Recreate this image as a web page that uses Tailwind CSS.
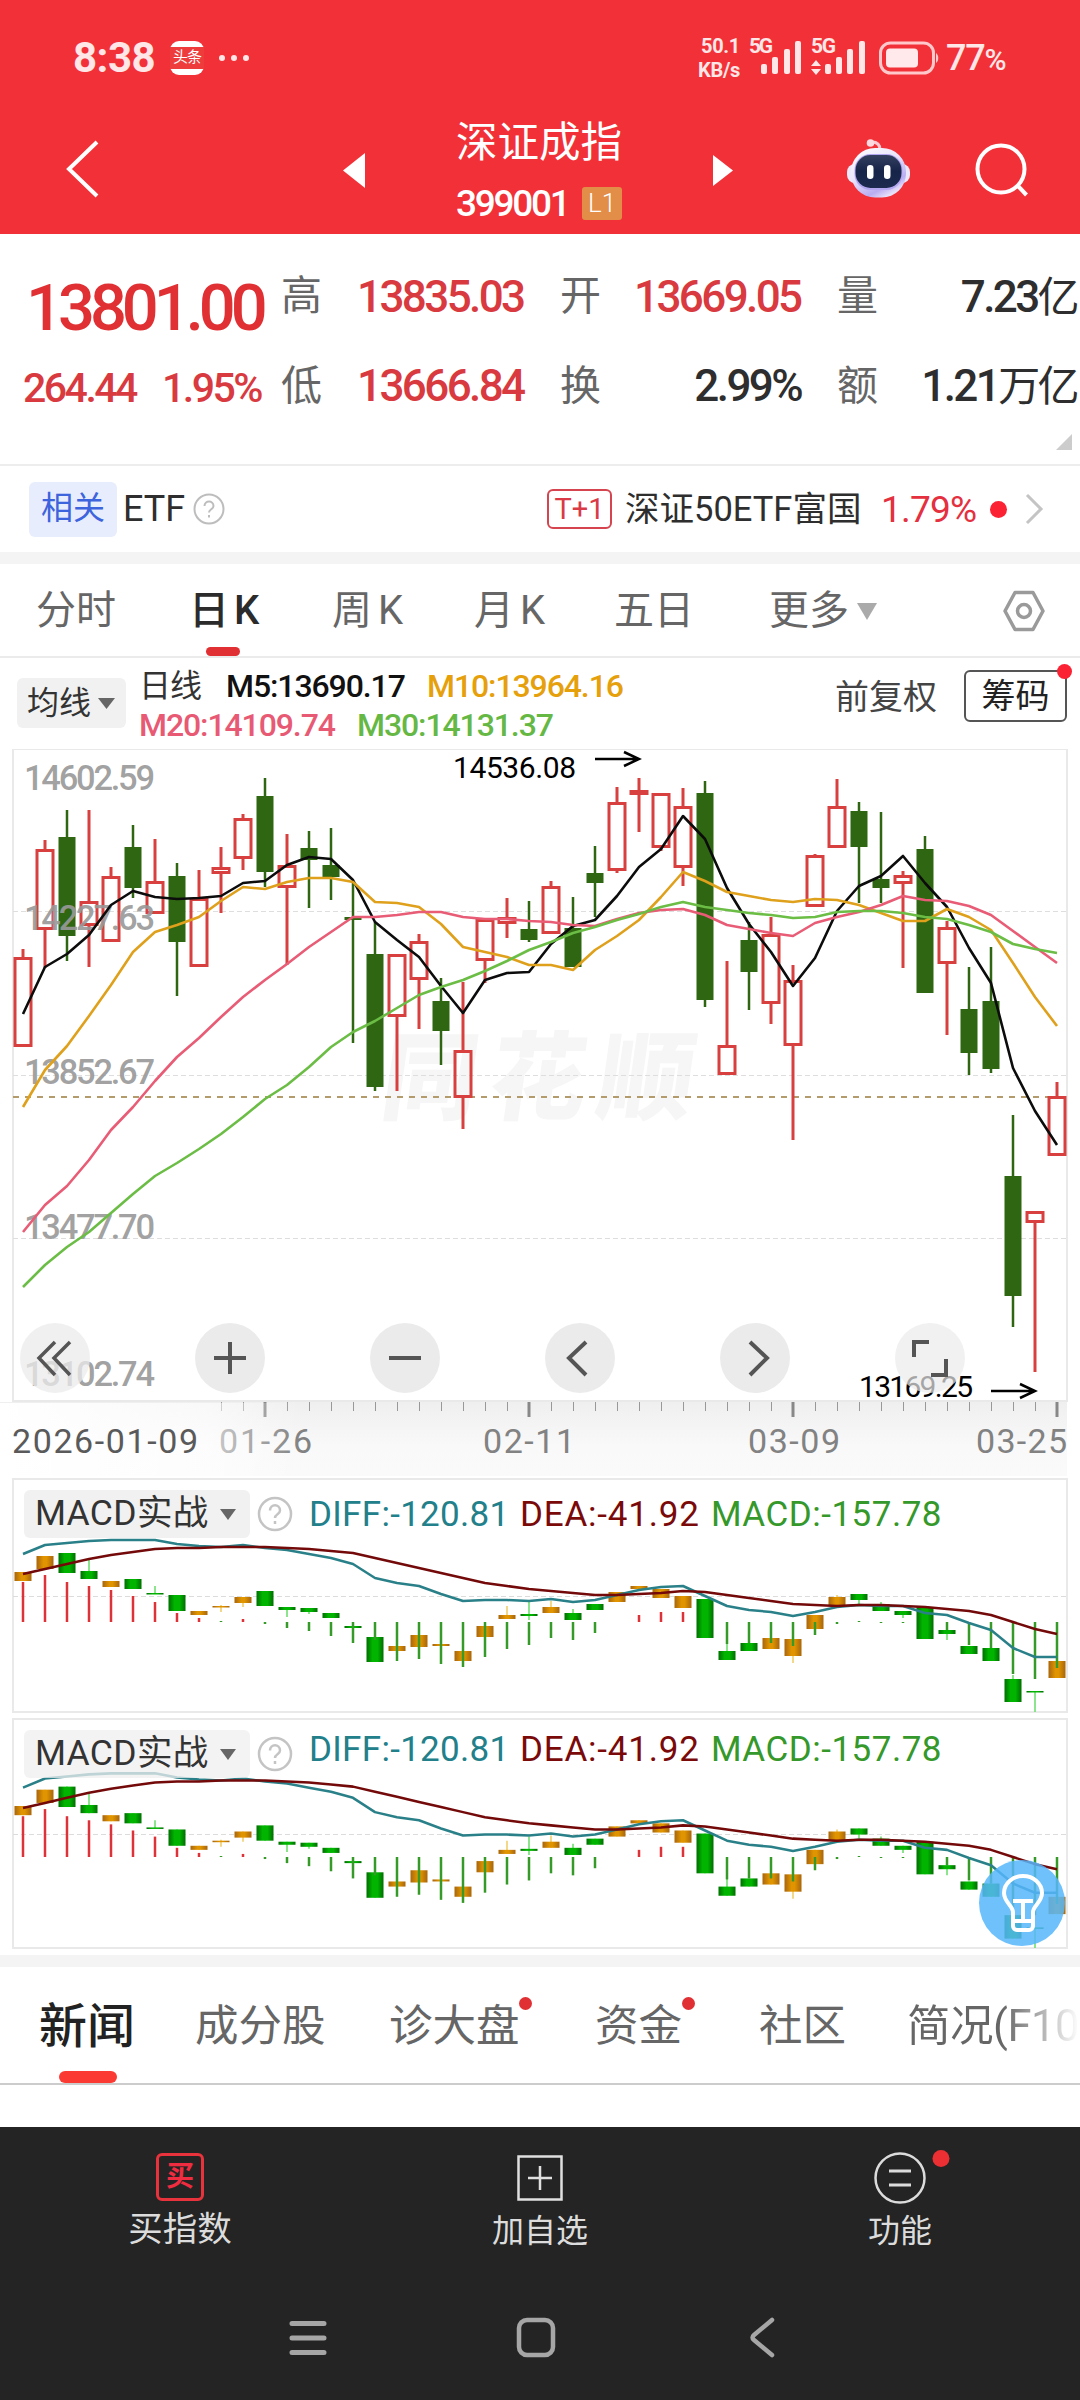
<!DOCTYPE html>
<html lang="zh-CN">
<head>
  <meta charset="UTF-8" />
  <meta name="viewport" content="width=device-width, initial-scale=1.0" />
  <title>深证成指 399001</title>
  <script src="https://cdn.jsdelivr.net/npm/@tailwindcss/browser@4"></script>
</head>
<body class="bg-white">
  <div class="w-[1080px] h-[2400px] overflow-hidden flex flex-col bg-white leading-none whitespace-nowrap font-[Roboto,'Noto_Sans_CJK_SC',sans-serif]">

    <!-- Header -->
    <header class="h-[234px] shrink-0 bg-[#f23037] text-white">
      <!-- Status bar -->
      <div class="h-[116px] flex items-center pl-[73px] text-[#ffe6e7]">
        <span class="w-[97px] text-[42px] font-bold tracking-[-.5px]">8:38</span>
        <span class="w-[34px] h-[34px] rounded-[9px] bg-white flex items-center">
          <span class="w-full h-[22px] bg-[#ee3b3c] text-white text-[15px] leading-[21px] text-center tracking-[-1px]">头条</span>
        </span>
        <svg class="ml-[14px]" width="32" height="8" fill="#ffe6e7"><circle cx="4" cy="4" r="3" /><circle cx="16" cy="4" r="3" /><circle cx="28" cy="4" r="3" /></svg>
        <div class="ml-[448px] w-[50px] text-[20px] font-bold leading-[24px] tracking-[-.300px]">
          <div class="pl-[3px]">50.1</div>
          <div>KB/s</div>
        </div>
        <svg width="118" height="60" viewBox="748 29 118 60" fill="#ffe6e7">
          <g font-family="Roboto" font-size="21" font-weight="700"><text x="749" y="54" textLength="24">5G</text><text x="811" y="54" textLength="25">5G</text></g>
          <rect x="761" y="65" width="6" height="10" rx="2" /><rect x="772" y="58" width="6" height="17" rx="2" /><rect x="784" y="50" width="6" height="25" rx="2" /><rect x="795" y="42" width="6" height="33" rx="2" />
          <path d="M811 67l5-6 5 6zM811 70h10l-5 6z" />
          <rect x="825" y="65" width="6" height="10" rx="2" /><rect x="836" y="58" width="6" height="17" rx="2" /><rect x="847" y="50" width="6" height="25" rx="2" /><rect x="859" y="42" width="6" height="33" rx="2" />
        </svg>
        <svg class="ml-[13px]" width="61" height="34" viewBox="0 0 61 34" fill="none">
          <rect x="1.5" y="2" width="53" height="30" rx="10" stroke="#ffc9cb" stroke-width="3" />
          <rect x="7" y="7.500" width="32" height="19" rx="4" fill="#ffe9ea" />
          <path d="M57 12c3 2 3 8 0 10z" fill="#ffc9cb" />
        </svg>
        <span class="ml-[6px] text-[36px] font-medium tracking-[-1.200px]">77<span class="text-[30px]">%</span></span>
      </div>

      <!-- Title bar -->
      <div class="h-[118px] flex">
        <svg class="ml-[66px] mt-[24px]" width="33" height="58" viewBox="0 0 33 58" fill="none" stroke="#fff" stroke-width="4"><path d="M31 2L3 29l28 27" /></svg>
        <svg class="ml-[244px] mt-[37px]" width="22" height="35" fill="#fff"><path d="M22 0v35L0 17.500z" /></svg>
        <div class="ml-[91px] w-[168px]">
          <div class="h-[56px] leading-[54px] text-[41.500px]">深证成指</div>
          <div class="mt-[4px] h-[54px] flex items-center">
            <span class="w-[126px] text-[37px] font-medium tracking-[-2.300px]">399001</span>
            <span class="w-[40px] h-[33px] bg-[#e28d48] rounded-[3px] text-[26px] leading-[33px] text-center font-light">L1</span>
          </div>
        </div>
        <svg class="ml-[89px] mt-[39px]" width="21" height="31" fill="#fff"><path d="M0 0v31l20-15.500z" /></svg>
        <svg class="ml-[112px] mt-[22px]" width="66" height="63" viewBox="0 0 66 63">
          <defs>
            <linearGradient id="shell" x1="0" y1="0" x2=".6" y2="1"><stop offset="0" stop-color="#fff" /><stop offset=".5" stop-color="#e9e4fb" /><stop offset=".85" stop-color="#b9adf2" /><stop offset="1" stop-color="#e6dff8" /></linearGradient>
            <linearGradient id="visor" x1="0" y1="0" x2="0" y2="1"><stop offset="0" stop-color="#34405e" /><stop offset=".5" stop-color="#17244a" /><stop offset="1" stop-color="#1d2a50" /></linearGradient>
          </defs>
          <path d="M34 12c0-6-3-8-8-8" stroke="#fbc9d3" stroke-width="3" fill="none" />
          <circle cx="24.500" cy="5" r="3.800" fill="#fcd9e0" />
          <rect x="1" y="26" width="63" height="19" rx="8" fill="#ece8fb" />
          <rect x="5" y="10" width="55" height="49.500" rx="24" fill="url(#shell)" />
          <rect x="8.500" y="16" width="48" height="36" rx="16" fill="#b3a6f0" />
          <rect x="9.500" y="17" width="46" height="33" rx="15" fill="url(#visor)" />
          <rect x="21" y="27" width="6.500" height="14" rx="3.200" fill="#fff" /><rect x="38" y="27" width="6.500" height="14" rx="3.200" fill="#fff" />
        </svg>
        <svg class="ml-[62px] mt-[25px]" width="56" height="57" viewBox="0 0 56 57" fill="none" stroke="#fff" stroke-width="4"><circle cx="27" cy="28" r="23.500" /><path d="M43 44l9.500 10" /></svg>
      </div>
    </header>

    <!-- Quote numbers -->
    <section class="relative h-[230px] shrink-0 pt-[22px] grid grid-cols-[281px_76px_203px_74px_203px_80px_163px] grid-rows-[80px_80px] gap-y-[10px] items-center text-[44px] text-[#2e2e2e] tracking-[-2.600px]">
      <span class="pl-[26px] pt-[25px] text-[65px] text-[#e03033] font-medium tracking-[-5px]">13801.00</span>
      <span class="pt-[1px] text-[41px] text-[#666]">高</span>
      <span class="pt-[2px] text-[#d93a3f] font-medium">13835.03</span>
      <span class="pt-[1px] text-[41px] text-[#666]">开</span>
      <span class="pt-[2px] text-[#d93a3f] font-medium">13669.05</span>
      <span class="pt-[1px] text-[41px] text-[#666]">量</span>
      <span class="pt-[2px] pr-[3px] text-right font-medium">7.23<span class="text-[42px] font-normal">亿</span></span>
      <span class="pl-[23px] pt-[4px] text-[41px] text-[#d93a3f] font-medium tracking-[-2.500px]"><span class="inline-block w-[139px]">264.44</span>1.95%</span>
      <span class="text-[41px] text-[#666]">低</span>
      <span class="text-[#d93a3f] font-medium">13666.84</span>
      <span class="text-[41px] text-[#666]">换</span>
      <span class="text-right font-medium pr-[36px]">2.99%</span>
      <span class="text-[41px] text-[#666]">额</span>
      <span class="pr-[3px] text-right font-medium">1.21<span class="text-[42px] font-normal">万亿</span></span>
      <svg class="absolute right-[8px] bottom-[14px]" width="16" height="16" fill="#ccc"><path d="M16 0v16H0z" /></svg>
    </section>

    <!-- Related ETF -->
    <section class="h-[88px] shrink-0 border-t-2 border-[#ededed] flex items-center text-[#2e2e2e]">
      <span class="ml-[29px] w-[88px] h-[55px] rounded-[6px] bg-[#e7edfd] text-[#3d63dd] text-[32px] leading-[53px] text-center">相关</span>
      <span class="ml-[6px] w-[70px] text-[36px]">ETF</span>
      <svg width="32" height="32" viewBox="0 0 32 32" fill="none" stroke="#bdbdbd" stroke-width="2"><circle cx="16" cy="16" r="14.500" /><path d="M11.500 13c0-6 9-6 9 0 0 3.500-4.500 3-4.500 6.500M16 22v2.500" /></svg>
      <span class="ml-[322px] w-[65px] h-[40px] rounded-[6px] border-2 border-[#d6454f] text-[#d93a45] text-[29px] leading-[36px] text-center">T+1</span>
      <span class="ml-[13px] w-[256px] text-[34.500px]">深证50ETF富国</span>
      <span class="w-[109px] text-[37px] text-[#e4303f] tracking-[-.800px]">1.79%</span>
      <span class="w-[17px] h-[17px] rounded-full bg-[#fb2234]"></span>
      <svg class="ml-[17px]" width="21" height="32" fill="none" stroke="#c4c4c4" stroke-width="3"><path d="M3 2l14 14L3 30" /></svg>
    </section>
    <div class="h-[12px] shrink-0 bg-[#f4f4f4]"></div>

    <!-- Period tabs -->
    <nav class="h-[94px] shrink-0 border-b-2 border-[#ebebeb] flex items-center pl-[36px] pt-[2px] text-[40px] text-[#666]">
      <span class="w-[153px]">分时</span>
      <span class="relative w-[143px] h-full leading-[90px] text-[#2b2b2b] font-medium">日<span class="ml-[5px]">K</span>
        <span class="absolute left-[17px] bottom-0 w-[34px] h-[9px] rounded-[5px] bg-[#e03033]"></span>
      </span>
      <span class="w-[142px]">周<span class="ml-[6px]">K</span></span>
      <span class="w-[140px]">月<span class="ml-[6px]">K</span></span>
      <span class="w-[155px]">五日</span>
      <span class="w-[88px]">更多</span>
      <svg width="20" height="17" fill="#aaa"><path d="M0 0h20L10 17z" /></svg>
      <svg class="ml-[126px]" width="42" height="42" viewBox="0 0 42 42" fill="none" stroke="#9a9a9a" stroke-width="3.500"><path d="M12 2.500h18L40 21 30 39.500H12L2 21z" stroke-linejoin="round" /><circle cx="21" cy="21" r="6.500" /></svg>
    </nav>

    <!-- Moving averages -->
    <section class="h-[91px] shrink-0 flex text-[32px] tracking-[-1.100px]">
      <div class="ml-[17px] mt-[20px] w-[109px] h-[50px] rounded-[6px] bg-[#f1f1f1] flex items-center pl-[10px] text-[#333] tracking-normal">
        <span class="w-[71px]">均线</span>
        <svg width="17" height="11" fill="#666"><path d="M0 0h17L8.500 11z" /></svg>
      </div>
      <div class="ml-[13px] w-[696px] pt-[9px] leading-[39px] font-medium">
        <div class="flex">
          <span class="w-[87px] text-[#333] font-normal tracking-[-1px]">日线</span>
          <span class="w-[201px] text-[#111]">M5:13690.17</span>
          <span class="text-[#e6a00c]">M10:13964.16</span>
        </div>
        <div class="flex text-[#e85a74]">
          <span class="w-[218px]">M20:14109.74</span>
          <span class="text-[#66b845]">M30:14131.37</span>
        </div>
      </div>
      <span class="w-[129px] pt-[22px] text-[34px] text-[#444] tracking-normal">前复权</span>
      <div class="relative mt-[12px] w-[103px] h-[52px] rounded-[6px] border-2 border-[#555] text-[#222] text-[34px] leading-[48px] text-center tracking-normal">筹码
        <span class="absolute -right-[7px] -top-[8px] w-[15px] h-[15px] rounded-full bg-[#fb2234]"></span>
      </div>
    </section>

    <!-- Candlestick chart -->
    <section class="relative h-[727px] shrink-0">
      <svg id="kline" width="1080" height="727" viewBox="0 749 1080 727"></svg>
      <div class="absolute left-[20px] top-[574px] flex gap-[105px]">
        <svg width="70" height="70" fill="none" stroke="#555" stroke-width="4"><circle cx="35" cy="35" r="35" fill="#ebebeb" fill-opacity=".75" stroke="none" /><path d="M35 19L19 35l16 17M50 19L34 35l16 17" stroke-width="3.500" /></svg>
        <svg width="70" height="70" fill="none" stroke="#555" stroke-width="4"><circle cx="35" cy="35" r="35" fill="#ebebeb" stroke="none" /><path d="M19 35h32M35 19v32" /></svg>
        <svg width="70" height="70" fill="none" stroke="#555" stroke-width="4"><circle cx="35" cy="35" r="35" fill="#ebebeb" stroke="none" /><path d="M19 35h32" /></svg>
        <svg width="70" height="70" fill="none" stroke="#555" stroke-width="4"><circle cx="35" cy="35" r="35" fill="#ebebeb" stroke="none" /><path d="M41 19L24 35l17 17" /></svg>
        <svg width="70" height="70" fill="none" stroke="#555" stroke-width="4"><circle cx="35" cy="35" r="35" fill="#ebebeb" stroke="none" /><path d="M30 19l17 16-17 17" /></svg>
        <svg width="70" height="70" fill="none" stroke="#555" stroke-width="4"><circle cx="35" cy="35" r="35" fill="#ebebeb" fill-opacity=".7" stroke="none" /><path d="M34 19H19v15M51 36v16H36" /></svg>
      </div>
    </section>

    <!-- MACD panels -->
    <section class="relative h-[240px] shrink-0">
      <svg id="macd1" class="absolute inset-0" width="1080" height="240" viewBox="0 1476 1080 240"></svg>
      <div class="relative pt-[14px] pl-[24px] flex items-center text-[35px]">
        <div class="w-[226px] h-[48px] rounded-[6px] bg-[#efefef]/85 flex items-center pl-[11px] text-[#333]">
          <span class="w-[185px] text-[35.500px] tracking-[.300px]">MACD实战</span>
          <svg width="16" height="11" fill="#666"><path d="M0 0h16L8 11z" /></svg>
        </div>
        <svg class="ml-[7px]" width="36" height="36" viewBox="0 0 36 36" fill="none" stroke="#c4c4c4" stroke-width="2.500"><circle cx="18" cy="18" r="16" /><path d="M13 14.500c0-7 10-7 10 0 0 4-5 3.500-5 7.500M18 25v3" /></svg>
        <span class="ml-[16px] w-[211px] text-[#22808a] tracking-[.300px]">DIFF:-120.81</span>
        <span class="w-[191px] text-[#7a0a0a] tracking-[.8px]">DEA:-41.92</span>
        <span class="text-[#35982a] tracking-[.5px]">MACD:-157.78</span>
      </div>
    </section>
    <section class="relative h-[239px] shrink-0">
      <svg id="macd2" class="absolute inset-0" width="1080" height="239" viewBox="0 1716 1080 239"></svg>
      <div class="relative pt-[14px] pl-[24px] flex items-center text-[35px]">
        <div class="w-[226px] h-[48px] rounded-[6px] bg-[#efefef]/75 flex items-center pl-[11px] text-[#333]">
          <span class="w-[185px] text-[35.500px] tracking-[.300px]">MACD实战</span>
          <svg width="16" height="11" fill="#666"><path d="M0 0h16L8 11z" /></svg>
        </div>
        <svg class="ml-[7px]" width="36" height="36" viewBox="0 0 36 36" fill="none" stroke="#c4c4c4" stroke-width="2.500"><circle cx="18" cy="18" r="16" /><path d="M13 14.500c0-7 10-7 10 0 0 4-5 3.500-5 7.500M18 25v3" /></svg>
        <span class="ml-[16px] mb-[10px] w-[211px] text-[#22808a] tracking-[.300px]">DIFF:-120.81</span>
        <span class="mb-[10px] w-[191px] text-[#7a0a0a] tracking-[.8px]">DEA:-41.92</span>
        <span class="mb-[10px] text-[#35982a] tracking-[.5px]">MACD:-157.78</span>
      </div>
      <!-- Floating tip button -->
      <svg class="absolute left-[979px] top-[144px]" width="86" height="86" viewBox="0 0 86 86" fill="none" stroke="#fff" stroke-width="4">
        <circle cx="43" cy="43" r="43" fill="#56b6fc" fill-opacity=".85" stroke="none" />
        <path d="M34 52c0-6-9-10-9-19a19 17 0 0 1 38 0c0 9-9 13-9 19v14a4 4 0 0 1-4 4H38a4 4 0 0 1-4-4zM34 41h20M44 41v20M35 61h18" />
      </svg>
    </section>
    <div class="h-[12px] shrink-0 bg-[#f4f4f4]"></div>

    <!-- Content tabs -->
    <nav class="relative h-[118px] shrink-0 border-b-2 border-[#ccc] flex items-center pl-[39px] pt-[3px] text-[43.500px] text-[#666]">
      <span class="w-[156px] text-[48px] text-[#222] font-medium">新闻</span>
      <span class="w-[194px]">成分股</span>
      <span class="relative w-[206px]">诊大盘<span class="absolute left-[130px] -top-[8px] w-[13px] h-[13px] rounded-full bg-[#e03033]"></span></span>
      <span class="relative w-[164px]">资金<span class="absolute left-[87px] -top-[8px] w-[13px] h-[13px] rounded-full bg-[#e03033]"></span></span>
      <span class="w-[148px]">社区</span>
      <span class="bg-linear-to-r from-[#666] from-55% to-white bg-clip-text text-transparent leading-[60px] tracking-[-.5px]">简况(F10</span>
      <span class="absolute left-[59px] bottom-0 w-[58px] h-[12px] rounded-[6px] bg-[#fb3b33]"></span>
    </nav>
    <div class="h-[42px] shrink-0"></div>

    <!-- Bottom actions -->
    <footer class="flex-1 bg-[#242424] text-[#dcdcdc]">
      <div class="h-[150px] grid grid-cols-3 text-center">
        <div class="pt-[26px] flex flex-col items-center">
          <span class="w-[48px] h-[48px] rounded-[6px] border-3 border-[#e8323c] text-[#f02c40] text-[28px] leading-[42px] font-bold">买</span>
          <span class="mt-[11px] text-[34.500px] leading-[34px]">买指数</span>
        </div>
        <div class="pt-[28px] flex flex-col items-center">
          <svg width="46" height="46" fill="none" stroke="#e0e0e0" stroke-width="2.500"><path d="M1.500 1.500h43v43h-43zM11 23h24M23 11v24" /></svg>
          <span class="mt-[14px] text-[32px] leading-[32px]">加自选</span>
        </div>
        <div class="pt-[25px] flex flex-col items-center">
          <svg class="overflow-visible" width="52" height="52" fill="none" stroke="#dcdcdc" stroke-width="2.500"><circle cx="26" cy="26" r="24.500" /><path d="M15 19h22M15 33h22" stroke-width="3" /><circle cx="67" cy="6.500" r="8.500" fill="#ec2f33" stroke="none" /></svg>
          <span class="mt-[11px] text-[32px] leading-[32px]">功能</span>
        </div>
      </div>
      <!-- System navigation -->
      <div class="pt-[40px] pl-[289px] flex text-[#a6a6a6]" >
        <svg width="38" height="42" fill="none" stroke="currentColor" stroke-width="5" stroke-linecap="round"><path d="M3 6.500h32M3 21h32M3 35.500h32" /></svg>
        <svg class="ml-[189px]" width="40" height="42" fill="none" stroke="currentColor" stroke-width="4.500"><rect x="3" y="3" width="34" height="35" rx="8" /></svg>
        <svg class="ml-[192px]" width="30" height="42" fill="none" stroke="currentColor" stroke-width="4.500" stroke-linecap="round"><path d="M24 3L6 18q-3 2.500 0 5l18 15" /></svg>
      </div>
    </footer>
  </div>

  <script>
    // [color, high, open/close top, open/close bottom, low]
    const candles = [
      ["r",949,957,1047,1047],["r",840,849,930,968],["g",810,837,936,961],["r",810,901,926,967],["r",867,876,942,942],["g",825,847,888,898],
      ["r",839,881,914,914],["g",863,876,942,996],["r",870,898,967,967],["r",847,867,874,913],["r",814,818,859,870],["g",778,796,872,887],
      ["r",834,865,888,965],["g",831,848,860,908],["g",828,865,877,900],["g",882,917,920,1043],["g",922,954,1087,1091],["r",954,954,1017,1091],
      ["r",934,941,980,1029],["g",978,1001,1031,1065],["r",982,1050,1098,1129],["r",918,919,961,983],["r",898,917,924,938],["g",901,929,940,942],
      ["r",881,886,934,934],["g",897,928,967,967],["g",846,873,883,917],["r",787,802,871,873],["r",778,790,795,832],["r",793,793,848,851],
      ["r",788,806,868,886],["g",781,793,1000,1007],["r",961,1045,1075,1075],["g",922,940,972,1010],["r",917,934,1004,1024],["r",965,980,1046,1140],
      ["r",854,855,907,907],["r",779,806,848,848],["g",802,811,847,903],["g",812,879,888,903],["r",871,875,884,968],["g",836,849,993,993],
      ["r",921,927,964,1035],["g",967,1009,1053,1075],["g",947,1001,1069,1073],["g",1115,1176,1296,1327],["r",1211,1211,1223,1372],["r",1082,1096,1156,1156]
    ];
    const ma5 = [1014,967,954,935,905,891,897,899,898,896,883,881,865,857,859,880,922,940,957,986,1013,980,973,972,944,926,920,896,867,849,816,839,888,924,952,986,958,911,886,876,856,883,907,948,983,1068,1111,1145];
    const ma10 = [1107,1070,1046,1016,985,952,932,925,917,901,887,889,882,878,878,882,902,903,907,924,947,952,957,965,965,970,950,936,920,897,872,881,892,896,900,902,899,900,905,913,921,921,909,917,930,963,997,1026];
    const ma20 = [1232,1205,1186,1160,1130,1107,1081,1057,1038,1017,997,980,964,947,932,917,917,915,912,912,917,919,919,921,922,925,926,919,913,910,909,915,925,929,933,936,923,917,912,905,896,900,901,906,915,931,947,963];
    const ma30 = [1287,1265,1247,1232,1213,1194,1176,1163,1149,1134,1117,1099,1085,1067,1047,1032,1021,1008,995,987,980,971,961,950,942,933,927,920,914,907,902,907,910,913,915,918,917,912,911,911,913,917,919,925,932,944,949,953];

    // [color, high, top, bottom, low, histogram end]
    const zero = 1622;
    const macd = [
      ["o",1572,1572,1581,1581,1582],["o",1556,1556,1569,1569,1575],["g",1553,1553,1573,1573,1582],["g",1560,1571,1579,1579,1586],["o",1581,1581,1587,1587,1590],["g",1579,1579,1589,1589,1596],
      ["g",1586,1593,1594,1594,1602],["g",1595,1595,1611,1611,1613],["o",1611,1611,1615,1615,1618],["o",1605,1606,1607,1612,1621],["o",1597,1597,1603,1607,1619],["g",1591,1591,1606,1606,1624],
      ["g",1607,1607,1610,1617,1628],["g",1608,1608,1612,1614,1631],["g",1613,1613,1618,1618,1636],["g",1623,1626,1628,1628,1643],["g",1637,1637,1662,1662,1640],["o",1646,1646,1651,1651,1661],
      ["o",1635,1635,1647,1647,1659],["o",1644,1644,1646,1646,1664],["o",1651,1651,1661,1661,1667],["o",1626,1626,1637,1637,1657],["o",1606,1615,1619,1619,1649],["g",1602,1614,1616,1620,1645],
      ["o",1601,1607,1613,1613,1638],["g",1609,1613,1620,1620,1640],["g",1604,1604,1610,1610,1633],["o",1592,1592,1602,1602,1622],["o",1586,1586,1589,1589,1615],["o",1589,1589,1598,1598,1612],
      ["o",1596,1596,1608,1608,1612],["g",1599,1599,1638,1638,1622],["g",1643,1651,1660,1660,1644],["g",1643,1643,1651,1651,1643],["o",1638,1638,1649,1649,1643],["o",1639,1639,1656,1663,1646],
      ["o",1615,1615,1629,1629,1635],["o",1595,1597,1606,1606,1624],["g",1594,1594,1600,1604,1621],["g",1602,1604,1611,1611,1623],["g",1611,1611,1615,1618,1623],["g",1607,1607,1639,1639,1622],
      ["g",1625,1630,1634,1640,1630],["g",1646,1646,1654,1654,1645],["g",1648,1648,1661,1661,1648],["g",1675,1679,1702,1702,1674],["g",1691,1691,1692.5,1712,1679],["o",1661,1661,1678,1678,1668]
    ];
    const diff = [1554,1545,1543,1541,1540,1540,1540,1544,1546,1547,1545,1548,1550,1554,1558,1564,1578,1583,1586,1594,1601,1600,1600,1601,1599,1602,1600,1595,1590,1587,1586,1596,1606,1610,1612,1616,1612,1607,1605,1606,1606,1613,1615,1623,1630,1648,1657,1657];
    const dea = [1574,1569,1564,1559,1555,1552,1549,1548,1548,1547,1547,1547,1548,1549,1551,1553,1558,1563,1568,1573,1578,1583,1586,1589,1591,1593,1595,1595,1594,1593,1591,1592,1595,1598,1601,1604,1605,1606,1605,1605,1606,1607,1609,1611,1615,1622,1629,1634];

    const cx = (i) => 23 + i * 22;
    const line = (ys, color, w = 2) =>
      `<polyline fill="none" stroke="${color}" stroke-width="${w}" stroke-linejoin="round" points="${ys.map((y, i) => cx(i) + "," + y).join(" ")}"/>`;

    function drawKline() {
      let s = `
        <defs>
          <linearGradient id="axis" x1="0" y1="0" x2="0" y2="1"><stop offset="0" stop-color="#efefef"/><stop offset=".6" stop-color="#f9f9f9"/><stop offset="1" stop-color="#fafafa"/></linearGradient>
          <linearGradient id="fade" x1="0" x2="1"><stop offset="0" stop-color="#fff"/><stop offset=".7" stop-color="#fff" stop-opacity=".6"/><stop offset="1" stop-color="#fff" stop-opacity="0"/></linearGradient>
        </defs>
        <text x="0" y="0" transform="translate(378 1112) skewX(-8)" font-family="Noto Sans CJK SC" font-weight="900" font-size="96" textLength="312" fill="#f6f6f7">同花顺</text>
        <rect x="13" y="749" width="1054" height="652" fill="none" stroke="#e9e9e9" stroke-width="2"/>`;
      [911, 1075, 1238].forEach((y) => {
        s += `<path d="M13 ${y}.5H1066" stroke="#dedede" stroke-width="1" stroke-dasharray="5 3"/>`;
      });
      s += `<path d="M13 1097H1066" stroke="#b39b6c" stroke-width="2" stroke-dasharray="6 6"/>`;
      candles.forEach(([c, h, t, b, l], i) => {
        const x = cx(i);
        if (c === "r") {
          s += `<path d="M${x} ${h}V${t}M${x} ${b}V${l}" stroke="#d8403f" stroke-width="3"/>`;
          s += `<rect x="${x - 8}" y="${t + 1.5}" width="16" height="${b - t - 3}" fill="none" stroke="#d8403f" stroke-width="3"/>`;
        } else {
          s += `<path d="M${x} ${h}V${l}" stroke="#2f6612" stroke-width="2.500"/>`;
          s += `<rect x="${x - 8.5}" y="${t}" width="17" height="${b - t}" fill="#2f6612"/>`;
        }
      });
      [["14602.59", 790], ["14227.63", 930], ["13852.67", 1084], ["13477.70", 1239], ["13102.74", 1386]].forEach(([p, y]) => {
        s += `<text x="24" y="${y}" textLength="131" font-family="Roboto" font-weight="500" font-size="34.500" fill="#999" fill-opacity=".92">${p}</text>`;
      });
      s += line(ma5, "#0c0c0c", 2.6) + line(ma10, "#dfa01c", 2.6) + line(ma20, "#e85c76", 2.6) + line(ma30, "#6bbd45", 2.6);
      s += `
        <g font-family="Roboto" font-size="30" fill="#000"><text x="453" y="778" textLength="123">14536.08</text><text x="859" y="1397" textLength="114">13169.25</text></g>
        <g fill="none" stroke="#000" stroke-width="2.500"><path d="M595 759H638M624 752l15 7-15 7"/><path d="M991 1391H1034M1020 1384l15 7-15 7"/></g>
        <rect x="0" y="1402" width="1067" height="74" fill="url(#axis)"/>`;
      for (let i = 9; i < 48; i++) {
        s += i % 12 === 11
          ? `<path d="M${cx(i)} 1402v15" stroke="#888" stroke-width="3"/>`
          : `<path d="M${cx(i)}.500 1402v9" stroke="#999" stroke-width="1"/>`;
      }
      s += `<g font-family="Roboto" font-size="34" fill="#828282">
          <text x="219" y="1453" textLength="93">01-26</text><text x="483" y="1453" textLength="92">02-11</text>
          <text x="748" y="1453" textLength="92">03-09</text><text x="976" y="1453" textLength="91">03-25</text>
        </g>
        <rect x="0" y="1403" width="300" height="73" fill="url(#fade)"/>
        <text x="12" y="1453" textLength="186" font-family="Roboto" font-size="34" fill="#5a5a5a">2026-01-09</text>`;
      document.getElementById("kline").innerHTML = s;
    }

    function drawMacd(id, top, height, transform) {
      let s = `
        <defs>
          <linearGradient id="${id}g"><stop offset="0" stop-color="#006e00"/><stop offset=".35" stop-color="#00b400"/><stop offset=".65" stop-color="#00b400"/><stop offset="1" stop-color="#006e00"/></linearGradient>
          <linearGradient id="${id}o"><stop offset="0" stop-color="#a8650c"/><stop offset=".4" stop-color="#e09400"/><stop offset=".6" stop-color="#e09400"/><stop offset="1" stop-color="#a8650c"/></linearGradient>
          <clipPath id="${id}c"><rect x="12" y="${top}" width="1056" height="${height}"/></clipPath>
        </defs>
        <rect x="13" y="${top}" width="1054" height="${height}" fill="#fff" stroke="#e9e9e9" stroke-width="2"/>
        <path d="M13 ${top + Math.round(height / 2)}.500H1066" stroke="#dcdcdc" stroke-dasharray="5 3"/>
        <g clip-path="url(#${id}c)"><g transform="${transform}">`;
      macd.forEach(([c, h, t, b, l, m], i) => {
        const x = cx(i);
        s += `<path d="M${x} ${h}V${l}" stroke="${c === "g" ? "#66dd66" : "#eecb60"}" stroke-width="1.500"/>`;
        s += `<rect x="${x - 8.5}" y="${t}" width="17" height="${Math.max(b - t, 1.5)}" fill="url(#${id}${c})"/>`;
        s += `<path d="M${x} ${zero}V${m}" stroke="${m < zero - 2 ? "#dd3338" : "#359a28"}" stroke-width="2.500"/>`;
      });
      s += line(diff, "#2a8088", 2.5) + line(dea, "#730909", 2.5) + `</g></g>`;
      document.getElementById(id).innerHTML = s;
    }

    drawKline();
    drawMacd("macd1", 1479, 233, "");
    drawMacd("macd2", 1719, 229, "translate(0 1857) scale(1 1.02) translate(0 -1622)");
  </script>
</body>
</html>
